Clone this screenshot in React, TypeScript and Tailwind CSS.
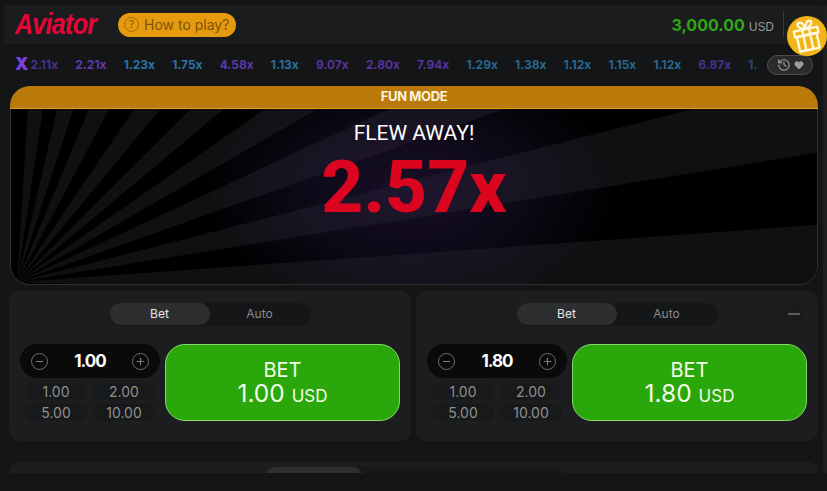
import React from "react";
import { History, Heart, Minus, Plus } from "lucide-react";

const multipliers: [string, string][] = [
  ["2.11x", "#4b2f8f"], ["2.21x", "#5f38b0"], ["1.23x", "#2a74a8"], ["1.75x", "#2a74a8"], ["4.58x", "#5a38a8"],
  ["1.13x", "#2a6f9f"], ["9.07x", "#55339e"], ["2.80x", "#55339e"], ["7.94x", "#55339e"], ["1.29x", "#276690"],
  ["1.38x", "#276690"], ["1.12x", "#276690"], ["1.15x", "#276690"], ["1.12x", "#276690"], ["6.87x", "#4a2e91"], ["1.", "#1f4f70"],
];

const angles = [3.6, 8.5, 13, 18, 22.5, 28, 34, 39.6, 45, 50, 55, 60, 65, 70.4, 75.6, 80.8, 85.9, 92];

function Rays() {
  const ox = 6;
  const oy = 174;
  const far = 1400;
  const polys: string[] = [];
  for (let i = 0; i + 1 < angles.length; i += 2) {
    const a = (angles[i] * Math.PI) / 180;
    const b = (angles[i + 1] * Math.PI) / 180;
    polys.push(
      `${ox},${oy} ${ox + far * Math.sin(a)},${oy - far * Math.cos(a)} ${ox + far * Math.sin(b)},${oy - far * Math.cos(b)}`
    );
  }
  return (
    <svg className="absolute inset-0 h-full w-full" viewBox="0 0 808 176" preserveAspectRatio="none">
      <defs>
        <radialGradient id="glow" gradientUnits="userSpaceOnUse" cx="400" cy="80" r="210" gradientTransform="translate(400 80) scale(1 0.62) translate(-400 -80)">
          <stop offset="0" stopColor="#2a1c48" stopOpacity="0.55" />
          <stop offset="0.55" stopColor="#2a1c48" stopOpacity="0.3" />
          <stop offset="1" stopColor="#2a1c48" stopOpacity="0" />
        </radialGradient>
      </defs>
      <rect width="808" height="176" fill="#000000" />
      {polys.map((p, i) => (
        <polygon key={i} points={p} fill="#101011" />
      ))}
      <rect width="808" height="176" fill="url(#glow)" />
    </svg>
  );
}

function GiftIcon() {
  return (
    <svg width="34" height="34" viewBox="0 0 34 34" fill="none" stroke="#fff8e0" strokeWidth="2.4" strokeLinejoin="round" className="rotate-[-12deg]">
      <rect x="5" y="10" width="24" height="6" fill="#f2b518" />
      <rect x="7" y="16" width="20" height="15" />
      <path d="M13.5 10v21M20.5 10v21" />
      <path d="M17 10c-3-1-7-3-7-5.500s3-2.500 4.500-1S17 8 17 10zM17 10c3-1 7-3 7-5.500s-3-2.500-4.500-1S17 8 17 10z" />
    </svg>
  );
}

function BetPanel({ value, collapse }: { value: string; collapse?: boolean }) {
  const quick = ["1.00", "2.00", "5.00", "10.00"];
  return (
    <div className="relative h-[150px] w-[402px] shrink-0 rounded-[10px] bg-[#1c1d1e] pt-[12px]">
      <div className="mx-auto flex h-[23px] w-[201px] rounded-full bg-[#151617] text-[12px]">
        <div className="flex h-[22px] w-[100px] items-center justify-center rounded-full bg-[#2c2e2f] text-[#e6e6e6]">Bet</div>
        <div className="flex h-[22px] w-[100px] items-center justify-center text-[#8a8a8a]">Auto</div>
      </div>
      {collapse && (
        <div className="absolute right-[14px] top-[14px] flex h-[18px] w-[20px] items-center justify-center rounded-[6px] bg-[#1a1b1c]">
          <div className="h-[1.500px] w-[12px] bg-[#5c5c5c]" />
        </div>
      )}
      <div className="mt-[18px] flex gap-[5px] px-[11px]">
        <div className="w-[140px] shrink-0">
          <div className="flex h-[34px] items-center justify-between rounded-full bg-[#0a0a0a] px-[11px]">
            <span className="flex h-[17px] w-[17px] items-center justify-center rounded-full border border-[#6e6e6e] text-[#7d7d7d]">
              <Minus size={11} strokeWidth={2.5} />
            </span>
            <span className="pt-[1px] text-[17px] font-bold tracking-[-1px] text-white">{value}</span>
            <span className="flex h-[17px] w-[17px] items-center justify-center rounded-full border border-[#6e6e6e] text-[#7d7d7d]">
              <Plus size={11} strokeWidth={2.5} />
            </span>
          </div>
          <div className="mt-[5px] grid grid-cols-2 gap-x-[6px] gap-y-[4px] px-[5px]">
            {quick.map((q) => (
              <div key={q} className="flex h-[17px] items-center justify-center rounded-full bg-[#18191a] text-[14px] text-[#8f8f8f]">
                {q}
              </div>
            ))}
          </div>
        </div>
        <div className="flex h-[77px] flex-1 flex-col items-center justify-center rounded-[20px] border border-[#86d96c] bg-[#2aa70a] pt-[2px] text-[#f2fbe9]">
          <div className="text-[20px] leading-[22px]">BET</div>
          <div className="text-[24.500px] leading-[24px]">
            {value} <span className="text-[17px]">USD</span>
          </div>
        </div>
      </div>
    </div>
  );
}

export default function App() {
  return (
    <div className="relative h-[491px] w-[827px] overflow-hidden bg-[#141516] font-['Inter',sans-serif]">
      <div className="absolute right-0 top-[5px] h-[468px] w-[4px] bg-[#1e1f20]" />
      <div className="pt-[5px]">
        <header className="relative ml-[4px] mr-[5px] flex h-[39px] items-center bg-[#1b1c1d] pl-[11px]">
          <span className="inline-block w-[82px] scale-y-[1.15] whitespace-nowrap font-['Liberation_Sans',sans-serif] text-[25px] font-bold italic tracking-[-0.7px] text-[#e50539]">Aviator</span>
          <div className="ml-[21px] flex h-[24px] w-[118px] items-center gap-[5px] rounded-full bg-[#e69a0e] pl-[6px] text-[14px] text-[#80530f]">
            <span className="flex h-[15px] w-[15px] items-center justify-center rounded-full border border-[#a06c10] text-[10px]">?</span>
            How to play?
          </div>
          <div className="ml-auto flex items-baseline gap-[4px] pr-[48px]">
            <span className="text-[16px] font-bold text-[#2fa814]">3,000.00</span>
            <span className="text-[12px] text-[#9a9a9a]">USD</span>
          </div>
          <div className="absolute right-[38px] top-[7px] h-[25px] w-px bg-[#3a3b3c]" />
        </header>
        <div className="relative flex h-[41px] items-center pl-[15px]">
          <span className="mr-[2px] text-[17px] font-black leading-none text-[#7c3fe0]">X</span>
          <div className="flex gap-[17.100px] whitespace-nowrap text-[12px] font-bold">
            {multipliers.map(([m, c], i) => (
              <span key={i} style={{ color: c }}>{m}</span>
            ))}
          </div>
          <div className="absolute left-[767px] top-[11px] flex h-[20px] w-[46px] items-center justify-center gap-[3px] rounded-full border border-[#4d4e4f] bg-[#2a2b2c] text-[#9d9d9d]">
            <History size={14} />
            <Heart size={10} fill="currentColor" />
          </div>
        </div>
      </div>
      <div className="absolute left-[787px] top-[16px] flex h-[40px] w-[40px] items-center justify-center rounded-full bg-[#f2b518]">
        <GiftIcon />
      </div>
      <main className="mx-[10px] mt-px w-[808px]">
        <div className="flex h-[23px] items-center justify-center rounded-t-[20px] border-b border-[#dfa01c] bg-[#b97a09] text-[13px] font-bold tracking-[-0.4px] text-[#fdf3dc]">
          FUN MODE
        </div>
        <div className="relative h-[176px] overflow-hidden rounded-b-[20px] border border-t-0 border-[#2f2f30]">
          <Rays />
          <div className="relative flex flex-col items-center pt-[10px]">
            <div className="font-['Roboto',sans-serif] text-[21px] leading-[28px] text-white">FLEW AWAY!</div>
            <div className="mt-[4px] font-['Roboto',sans-serif] text-[73px] font-extrabold leading-[72px] text-[#dc0520]">2.57x</div>
          </div>
        </div>
      </main>
      <div className="ml-[9px] mt-[6px] flex gap-[5px]">
        <BetPanel value="1.00" />
        <BetPanel value="1.80" collapse />
      </div>
      <div className="ml-[9px] mt-[21px] h-[11px] w-[809px] overflow-hidden rounded-t-[10px] bg-[#1c1d1e]">
        <div className="ml-[256px] mt-[5px] flex h-[23px] w-[300px] rounded-full bg-[#171819]">
          <div className="h-[22px] w-[98px] rounded-full bg-[#2c2e2f]" />
        </div>
      </div>
    </div>
  );
}
